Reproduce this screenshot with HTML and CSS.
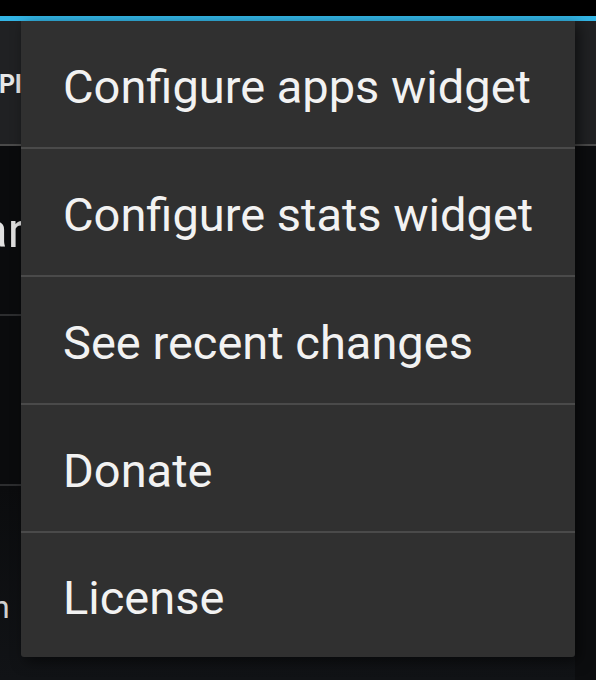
FILE: index.html
```html
<!DOCTYPE html>
<html>
<head>
<meta charset="utf-8">
<link rel="stylesheet" href="styles.css">
</head>
<body>
<div class="screen">
  <div class="statusbar"></div>
  <div class="accent"></div>
  <div class="app">
    <div class="header"><span class="header-title">Pl</span></div>
    <div class="row row-big"><span class="row-text-big">ar</span></div>
    <div class="row"></div>
    <div class="row row-last"><span class="row-text-small">n</span></div>
  </div>
  <div class="menu">
    <div class="menu-item">Configure apps widget</div>
    <div class="menu-item">Configure stats widget</div>
    <div class="menu-item">See recent changes</div>
    <div class="menu-item">Donate</div>
    <div class="menu-item">License</div>
  </div>
</div>
</body>
</html>
```

FILE: styles.css
```css
html, body {
  margin: 0;
  padding: 0;
}
body {
  width: 596px;
  height: 680px;
  overflow: hidden;
  background: #0c0d0f;
  font-family: Roboto, "Liberation Sans", sans-serif;
}
.screen {
  position: relative;
  width: 596px;
  height: 680px;
  display: flex;
  flex-direction: column;
}
.statusbar {
  height: 16px;
  background: #000;
}
.accent {
  height: 5px;
  background: #33b5e5;
}
.app {
  flex: 1;
  display: flex;
  flex-direction: column;
}
.header {
  height: 123px;
  background: #202123;
  border-bottom: 2px solid #4a4a4a;
  display: flex;
  align-items: center;
}
.header-title {
  color: #e8e8e8;
  font-weight: bold;
  font-size: 25px;
  margin-left: -1px;
  padding-top: 4px;
}
.row {
  height: 168px;
  background: #0a0b0d;
  border-bottom: 2px solid #2c2d2f;
  margin-right: 21px;
  display: flex;
  align-items: center;
}
.row-last {
  flex: 1;
  border-bottom: none;
  background: linear-gradient(#0b0c0e, #111316);
}
.row-text-big {
  color: #e0e0e0;
  font-size: 49px;
  margin-left: -19px;
  margin-top: 0;
}
.row-text-small {
  color: #d0d0d0;
  font-size: 32px;
  margin-left: -8px;
  margin-top: 48px;
}
.menu {
  position: absolute;
  top: 21px;
  left: 21px;
  width: 554px;
  background: #303030;
  border-radius: 0 0 3px 3px;
  box-shadow: 4px 4px 14px rgba(0, 0, 0, 0.55);
  display: flex;
  flex-direction: column;
}
.menu-item {
  height: 128px;
  display: flex;
  align-items: center;
  padding-left: 42px;
  padding-top: 4px;
  box-sizing: border-box;
  color: #f2f2f2;
  font-size: 47px;
  border-bottom: 2px solid #4a4a4a;
}
.menu-item:last-child {
  border-bottom: none;
  height: 124px;
}
```
